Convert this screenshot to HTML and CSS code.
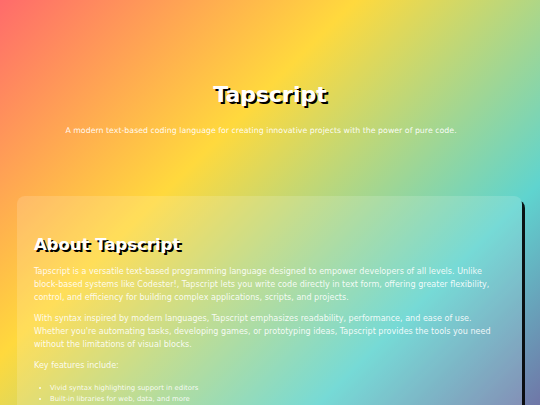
FILE: index.html
```html
<!DOCTYPE html>
<html lang="en">
<head>
<meta charset="utf-8">
<title>Tapscript</title>
<link rel="stylesheet" href="styles.css">
</head>
<body>
<header class="hero">
  <h1 class="hero-title">Tapscript</h1>
  <p class="hero-sub">A modern text-based coding language for creating innovative projects with the power of pure code.</p>
</header>
<main class="content">
  <section class="card">
    <h2 class="card-title">About Tapscript</h2>
    <p class="card-text">Tapscript is a versatile text-based programming language designed to empower developers of all levels. Unlike block-based systems like Codester!, Tapscript lets you write code directly in text form, offering greater flexibility, control, and efficiency for building complex applications, scripts, and projects.</p>
    <p class="card-text">With syntax inspired by modern languages, Tapscript emphasizes readability, performance, and ease of use. Whether you're automating tasks, developing games, or prototyping ideas, Tapscript provides the tools you need without the limitations of visual blocks.</p>
    <p class="card-text">Key features include:</p>
    <ul class="features">
      <li>Vivid syntax highlighting support in editors</li>
      <li>Built-in libraries for web, data, and more</li>
    </ul>
  </section>
</main>
</body>
</html>
```
FILE: styles.css
```css
html {
  height: 100%;
}
body {
  margin: 0;
  font-family: "DejaVu Sans", Verdana, sans-serif;
  color: #fff;
  background: linear-gradient(135deg, #ff6b6b 0%, #ffd93d 33%, #5fd4cf 67%, #7a3d8f 100%) 0 0 / 100% 540px no-repeat;
  background-color: #7a3d8f;
  min-height: 100%;
}
.hero {
  display: flex;
  flex-direction: column;
  align-items: center;
  padding-top: 82px;
}
.hero-title {
  margin: 0;
  font-size: 22px;
  font-weight: bold;
  line-height: 26px;
  text-shadow: 2px 2px 0 #000;
}
.hero-sub {
  margin: 17px 0 0;
  padding-right: 18px;
  font-size: 7.85px;
  line-height: 12px;
  color: rgba(255, 255, 255, 0.95);
}
.content {
  padding: 59px 18px 0 17px;
}
.card {
  background: rgba(255, 255, 255, 0.15);
  border-radius: 8px;
  box-shadow: 3px 4px 0 rgba(0, 0, 0, 0.9);
  padding: 18px 18px 18px 17px;
}
.card-title {
  margin: 21px 0 11px;
  font-size: 16.5px;
  line-height: 19px;
  text-shadow: 2px 2px 0 #000;
}
.card-text {
  margin: 0 0 8px;
  font-size: 8.05px;
  line-height: 13px;
  color: rgba(255, 255, 255, 0.9);
}
.features {
  margin: 11px 0 0;
  padding-left: 16px;
  font-size: 6.9px;
  line-height: 11px;
  color: rgba(255, 255, 255, 0.9);
}
```
